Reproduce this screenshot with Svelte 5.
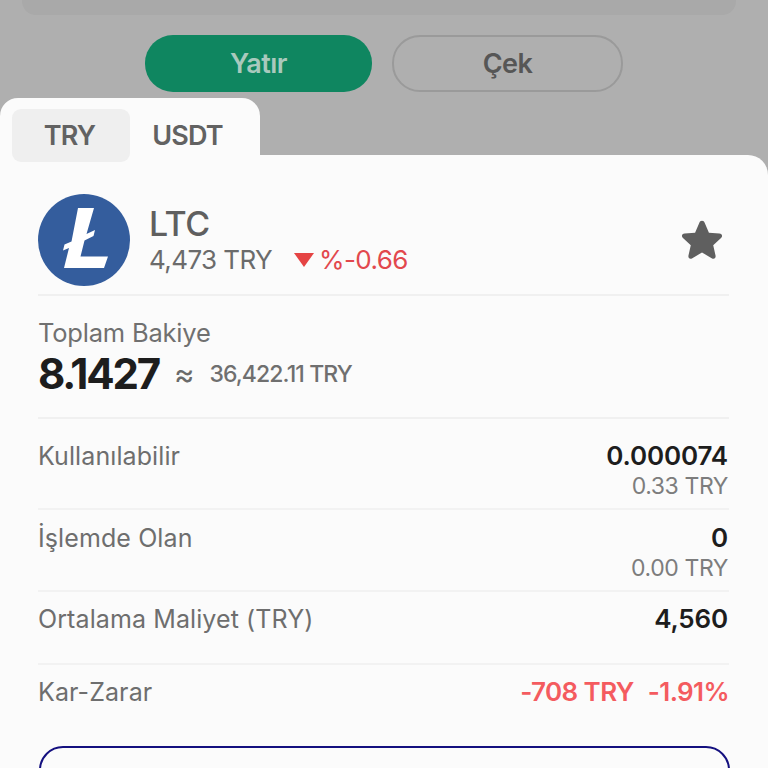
<script>
  const rows = [
    { label: 'Kullanılabilir', value: '0.000074', sub: '0.33 TRY' },
    { label: 'İşlemde Olan', value: '0', sub: '0.00 TRY' },
    { label: 'Ortalama Maliyet (TRY)', value: '4,560' }
  ];
</script>

<div class="screen">
  <div class="top-strip"></div>

  <div class="actions">
    <button class="btn deposit">Yatır</button>
    <button class="btn withdraw">Çek</button>
  </div>

  <div class="tabs">
    <div class="tab active">TRY</div>
    <div class="tab">USDT</div>
  </div>

  <div class="card">
    <div class="coin">
      <svg class="logo" viewBox="0 0 92 92">
        <circle cx="46" cy="46" r="46" fill="#345d9d" />
        <path d="M40 14 H56 L48.500 40 L57 36 L55.500 42 L46.500 46.500 L42.500 62.500 H70 L66 74 H26 L31 54 L25 56.500 L26.500 50.500 L33.500 47.500 Z" fill="#fff" />
      </svg>
      <div class="coin-info">
        <div class="coin-name">LTC</div>
        <div class="coin-price">
          <span>4,473 TRY</span>
          <span class="change">
            <svg class="down" viewBox="0 0 20 14"><path d="M0 0 H20 L10 14 Z" fill="#e54444" /></svg>
            %-0.66
          </span>
        </div>
      </div>
      <svg class="star" viewBox="0 0 40 40">
        <path d="M20 2.500 C21.300 2.500 22 3.300 22.500 4.500 L26.300 13.300 L35.800 14.200 C38.300 14.500 39 16.600 37.300 18.200 L30.200 24.700 L32.300 34 C32.800 36.500 31 37.800 28.800 36.500 L20 31.400 L11.200 36.500 C9 37.800 7.200 36.500 7.700 34 L9.800 24.700 L2.700 18.200 C1 16.600 1.700 14.500 4.200 14.200 L13.700 13.300 L17.500 4.500 C18 3.300 18.700 2.500 20 2.500 Z" fill="#5f5f5f" />
      </svg>
    </div>

    <div class="balance">
      <div class="balance-label">Toplam Bakiye</div>
      <div class="balance-line">
        <span class="balance-value">8.1427</span>
        <span class="approx">≈</span>
        <span class="balance-try">36,422.11 TRY</span>
      </div>
    </div>

    {#each rows as row}
      <div class="row">
        <div class="row-label">{row.label}</div>
        <div class="row-right">
          <div class="row-value">{row.value}</div>
          {#if row.sub}<div class="row-sub">{row.sub}</div>{/if}
        </div>
      </div>
    {/each}

    <div class="row last">
      <div class="row-label">Kar-Zarar</div>
      <div class="pnl"><span>-708 TRY</span><span>-1.91%</span></div>
    </div>

    <div class="outline"></div>
  </div>
</div>

<style>
  :global(body) {
    background: #afafaf;
    overflow: hidden;
  }

  .screen {
    height: 768px;
    overflow: hidden;
    background: #afafaf;
    font-family: Inter, "Liberation Sans", sans-serif;
    display: flex;
    flex-direction: column;
  }

  .top-strip {
    height: 15px;
    margin: 0 32px 0 22px;
    background: #a9a9a9;
    border-radius: 0 0 14px 14px;
    flex-shrink: 0;
  }

  .actions {
    display: flex;
    gap: 20px;
    margin: 20px 0 6px 145px;
    flex-shrink: 0;
  }

  .btn {
    height: 57px;
    border-radius: 28px;
    font-family: inherit;
    font-size: 27px;
    font-weight: 600;
    letter-spacing: -0.5px;
    padding: 0;
  }

  .deposit {
    width: 227px;
    background: #0f8660;
    border: none;
    color: #a9c9bd;
  }

  .withdraw {
    width: 231px;
    background: transparent;
    border: 2px solid #9a9a9a;
    color: #565656;
  }

  .tabs {
    width: 260px;
    height: 57px;
    box-sizing: border-box;
    padding: 11px 0 0 12px;
    background: #fbfbfb;
    border-radius: 18px 18px 0 0;
    display: flex;
    flex-shrink: 0;
    position: relative;
    z-index: 1;
  }

  .tab {
    height: 53px;
    width: 118px;
    display: flex;
    align-items: center;
    justify-content: center;
    border-radius: 9px;
    font-size: 27px;
    font-weight: 600;
    letter-spacing: -0.8px;
    color: #626262;
    padding-right: 3px;
    box-sizing: border-box;
  }

  .active {
    background: #efefef;
  }

  .card {
    flex: 1;
    background: #fbfbfb;
    border-radius: 0 20px 0 0;
    padding: 39px 39px 0 38px;
  }

  .coin {
    display: flex;
    align-items: center;
    height: 92px;
    padding-bottom: 8px;
    border-bottom: 2px solid #f0f0f0;
  }

  .logo {
    width: 92px;
    height: 92px;
    flex-shrink: 0;
  }

  .coin-info {
    margin-left: 19px;
    flex: 1;
  }

  .coin-name {
    font-size: 34px;
    line-height: 40px;
    color: #5f5f5f;
    font-weight: 500;
    letter-spacing: -0.5px;
  }

  .coin-price {
    display: flex;
    gap: 22px;
    font-size: 26px;
    line-height: 32px;
    letter-spacing: -0.6px;
    color: #6b6b6b;
  }

  .change {
    color: #e2484d;
    display: flex;
    align-items: center;
    gap: 5px;
  }

  .down {
    width: 20px;
    height: 14px;
  }

  .star {
    width: 44px;
    height: 44px;
    margin-right: 5px;
  }

  .balance {
    height: 123px;
    box-sizing: border-box;
    padding-top: 22px;
    border-bottom: 2px solid #f0f0f0;
  }

  .balance-label {
    font-size: 25.5px;
    line-height: 30px;
    letter-spacing: -0.2px;
    color: #707070;
  }

  .balance-line {
    display: flex;
    align-items: center;
    line-height: 52px;
  }

  .balance-value {
    font-size: 42px;
    font-weight: 700;
    letter-spacing: -2.2px;
    color: #1d1d1d;
  }

  .approx {
    font-size: 31px;
    color: #6b6b6b;
    margin: 0 15px 0 15px;
  }

  .balance-try {
    font-size: 23px;
    font-weight: 500;
    letter-spacing: -0.9px;
    color: #6f6f6f;
  }

  .row {
    display: flex;
    justify-content: space-between;
    min-height: 82px;
    box-sizing: border-box;
    padding-top: 12px;
    border-bottom: 2px solid #f2f2f2;
  }

  .row:nth-of-type(3) {
    min-height: 91px;
    padding-top: 21px;
  }

  .row:nth-of-type(5) {
    min-height: 73px;
    padding-top: 11px;
  }

  .row.last {
    border-bottom: none;
    min-height: 81px;
    padding-top: 11px;
  }

  .row-label {
    font-size: 25px;
    line-height: 32px;
    letter-spacing: 0.1px;
    color: #6e6e6e;
  }

  .row-right {
    text-align: right;
    margin-right: 1px;
  }

  .row-value {
    font-size: 26px;
    line-height: 32px;
    font-weight: 600;
    letter-spacing: -0.15px;
    color: #1d1d1d;
  }

  .row-sub {
    font-size: 23px;
    line-height: 29px;
    letter-spacing: -0.4px;
    color: #7d7d7d;
  }

  .pnl {
    display: flex;
    gap: 14px;
    font-size: 26px;
    line-height: 32px;
    font-weight: 600;
    letter-spacing: -0.6px;
    color: #f45b5f;
  }

  .outline {
    height: 60px;
    margin: 0 -1px 0 1px;
    border: 2px solid #14107f;
    border-radius: 24px;
    box-sizing: border-box;
  }
</style>
